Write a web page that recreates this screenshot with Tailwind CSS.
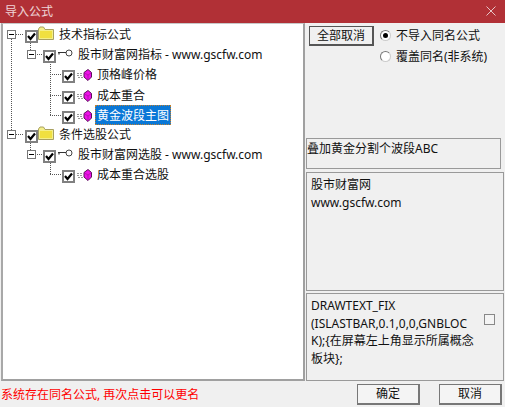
<!DOCTYPE html>
<html lang="zh-CN">

<head>
  <meta charset="UTF-8" />
  <title>导入公式</title>
  <script src="https://cdn.jsdelivr.net/npm/@tailwindcss/browser@4"></script>
</head>

<body class="bg-[#f0f0f0] overflow-hidden">
  <div class="w-[505px] h-[407px] flex flex-col text-[12px] leading-[17px] text-[#111] font-['Noto_Sans','Noto_Sans_CJK_SC',sans-serif]">
    <!-- title bar -->
    <div class="h-[23px] shrink-0 bg-[#b13036] flex items-center justify-between pl-[5px] pr-[8px] text-white/80">
      <span>导入公式</span>
      <svg width="10" height="10" viewBox="0 0 10 10" class="mr-[1px] mt-[-1px]"><path d="M0.5 0.5L9.5 9.5M9.5 0.5L0.5 9.5" stroke="#e6c4c6" fill="none" /></svg>
    </div>

    <div class="flex-1 flex pl-[1px] min-h-0">
      <!-- tree -->
      <div class="relative w-[304px] bg-white border-2 border-t border-[#a0a0a0] border-t-[#c8c8c8] border-l-[#a8a8a8]">
        <svg class="absolute left-0 top-0" width="300" height="170">
          <g stroke="#555" stroke-dasharray="1 1" fill="none">
            <path d="M8.5 15V106M13 10.5H21M27.5 19V26M32 30.5H40M47.5 38V91M47 50.5H59M47 71.5H59M47 91.5H59" />
            <path d="M13 110.5H21M27.5 119V126M32 130.5H40M47.5 139V150M47 150.5H59" />
          </g>
        </svg>
        <div class="relative flex flex-col">
          <div class="h-[20px] flex items-center pl-[4px]">
            <span class="w-[9px] h-[9px] mt-[1px] border border-[#777] bg-white flex items-center justify-center"><span class="w-[5px] h-px bg-black"></span></span>
            <span class="ml-[9px] mt-[5px] w-[13px] h-[13px] border-2 border-[#808080] bg-white flex items-center justify-center"><svg width="9" height="9" viewBox="0 0 9 9"><path d="M1 4L3.5 7L8 1.5" stroke="#000" stroke-width="2.2" fill="none" /></svg></span>
            <svg class="mt-[-3px]" width="16" height="14" viewBox="0 0 16 14"><path d="M0.5 3V13.5H15.5V3.5H7L5.5 1H2L0.5 3Z" fill="#f4ef8a" stroke="#a8a060" /><path d="M2 5H14V12H2Z" fill="#f0e040" /></svg>
            <span class="ml-[5px]">技术指标公式</span>
          </div>
          <div class="h-[20px] flex items-center pl-[24px]">
            <span class="w-[9px] h-[9px] mt-[1px] border border-[#777] bg-white flex items-center justify-center"><span class="w-[5px] h-px bg-black"></span></span>
            <span class="ml-[7px] mt-[5px] w-[13px] h-[13px] border-2 border-[#808080] bg-white flex items-center justify-center"><svg width="9" height="9" viewBox="0 0 9 9"><path d="M1 4L3.5 7L8 1.5" stroke="#000" stroke-width="2.2" fill="none" /></svg></span>
            <svg class="ml-[2px] mt-[-3px]" width="15" height="8" viewBox="0 0 15 8"><circle cx="11" cy="4" r="3" fill="none" stroke="#444" /><path d="M0 3.5H8M1 3.5V5.5" stroke="#333" stroke-width="1.2" fill="none" /></svg>
            <span class="ml-[5px]">股市财富网指标 - www.gscfw.com</span>
          </div>
          <div class="h-[20px] mb-[1px] flex items-center pl-[59px]">
            <span class="mt-[5px] w-[13px] h-[13px] border-2 border-[#808080] bg-white flex items-center justify-center"><svg width="9" height="9" viewBox="0 0 9 9"><path d="M1 4L3.5 7L8 1.5" stroke="#000" stroke-width="2.2" fill="none" /></svg></span>
            <svg class="ml-[2px] mt-[2px]" width="15" height="12" viewBox="0 0 15 12"><path d="M0 4.5H6M0 6.5H6M1 8.5H6" stroke="#999" stroke-dasharray="2 1" fill="none" /><path d="M11 0.5L14.5 3.5V8L11 11.5L7 8V3.5Z" fill="#ee10e8" stroke="#5a105a" /><path d="M7.5 4L11 6L14 4M11 6V11" stroke="#a010a0" stroke-width="0.7" fill="none" /></svg>
            <span class="ml-[5px]">顶格峰价格</span>
          </div>
          <div class="h-[20px] flex items-center pl-[59px]">
            <span class="mt-[5px] w-[13px] h-[13px] border-2 border-[#808080] bg-white flex items-center justify-center"><svg width="9" height="9" viewBox="0 0 9 9"><path d="M1 4L3.5 7L8 1.5" stroke="#000" stroke-width="2.2" fill="none" /></svg></span>
            <svg class="ml-[2px] mt-[2px]" width="15" height="12" viewBox="0 0 15 12"><path d="M0 4.5H6M0 6.5H6M1 8.5H6" stroke="#999" stroke-dasharray="2 1" fill="none" /><path d="M11 0.5L14.5 3.5V8L11 11.5L7 8V3.5Z" fill="#ee10e8" stroke="#5a105a" /><path d="M7.5 4L11 6L14 4M11 6V11" stroke="#a010a0" stroke-width="0.7" fill="none" /></svg>
            <span class="ml-[5px]">成本重合</span>
          </div>
          <div class="h-[20px] mb-[-1px] flex items-center pl-[59px]">
            <span class="mt-[5px] w-[13px] h-[13px] border-2 border-[#808080] bg-white flex items-center justify-center"><svg width="9" height="9" viewBox="0 0 9 9"><path d="M1 4L3.5 7L8 1.5" stroke="#000" stroke-width="2.2" fill="none" /></svg></span>
            <svg class="ml-[2px] mt-[2px]" width="15" height="12" viewBox="0 0 15 12"><path d="M0 4.5H6M0 6.5H6M1 8.5H6" stroke="#999" stroke-dasharray="2 1" fill="none" /><path d="M11 0.5L14.5 3.5V8L11 11.5L7 8V3.5Z" fill="#ee10e8" stroke="#5a105a" /><path d="M7.5 4L11 6L14 4M11 6V11" stroke="#a010a0" stroke-width="0.7" fill="none" /></svg>
            <span class="ml-[3px] h-[20px] shrink-0 px-[1px] flex items-center bg-[#0a78d7] text-white border border-dotted border-[#c08030]">黄金波段主图</span>
          </div>
          <div class="h-[20px] flex items-center pl-[4px]">
            <span class="w-[9px] h-[9px] mt-[1px] border border-[#777] bg-white flex items-center justify-center"><span class="w-[5px] h-px bg-black"></span></span>
            <span class="ml-[9px] mt-[5px] w-[13px] h-[13px] border-2 border-[#808080] bg-white flex items-center justify-center"><svg width="9" height="9" viewBox="0 0 9 9"><path d="M1 4L3.5 7L8 1.5" stroke="#000" stroke-width="2.2" fill="none" /></svg></span>
            <svg class="mt-[-3px]" width="16" height="14" viewBox="0 0 16 14"><path d="M0.5 3V13.5H15.5V3.5H7L5.5 1H2L0.5 3Z" fill="#f4ef8a" stroke="#a8a060" /><path d="M2 5H14V12H2Z" fill="#f0e040" /></svg>
            <span class="ml-[5px]">条件选股公式</span>
          </div>
          <div class="h-[20px] flex items-center pl-[24px]">
            <span class="w-[9px] h-[9px] mt-[1px] border border-[#777] bg-white flex items-center justify-center"><span class="w-[5px] h-px bg-black"></span></span>
            <span class="ml-[7px] mt-[5px] w-[13px] h-[13px] border-2 border-[#808080] bg-white flex items-center justify-center"><svg width="9" height="9" viewBox="0 0 9 9"><path d="M1 4L3.5 7L8 1.5" stroke="#000" stroke-width="2.2" fill="none" /></svg></span>
            <svg class="ml-[2px] mt-[-3px]" width="15" height="8" viewBox="0 0 15 8"><circle cx="11" cy="4" r="3" fill="none" stroke="#444" /><path d="M0 3.5H8M1 3.5V5.5" stroke="#333" stroke-width="1.2" fill="none" /></svg>
            <span class="ml-[5px]">股市财富网选股 - www.gscfw.com</span>
          </div>
          <div class="h-[20px] flex items-center pl-[59px]">
            <span class="mt-[5px] w-[13px] h-[13px] border-2 border-[#808080] bg-white flex items-center justify-center"><svg width="9" height="9" viewBox="0 0 9 9"><path d="M1 4L3.5 7L8 1.5" stroke="#000" stroke-width="2.2" fill="none" /></svg></span>
            <svg class="ml-[2px] mt-[2px]" width="15" height="12" viewBox="0 0 15 12"><path d="M0 4.5H6M0 6.5H6M1 8.5H6" stroke="#999" stroke-dasharray="2 1" fill="none" /><path d="M11 0.5L14.5 3.5V8L11 11.5L7 8V3.5Z" fill="#ee10e8" stroke="#5a105a" /><path d="M7.5 4L11 6L14 4M11 6V11" stroke="#a010a0" stroke-width="0.7" fill="none" /></svg>
            <span class="ml-[5px]">成本重合选股</span>
          </div>
        </div>
      </div>

      <!-- right column -->
      <div class="w-[200px] pl-[1px] flex flex-col">
        <div class="h-[115px] flex pt-[3px] pl-[3px]">
          <button class="w-[65px] h-[20px] bg-[#f0f0f0] border border-[#555] border-b-2 border-r-2 text-center leading-[17px]">全部取消</button>
          <div class="ml-[6px] flex flex-col gap-[4px] pt-[1px]">
            <label class="flex items-center h-[17px]"><span class="w-[11px] h-[11px] rounded-full bg-white border border-[#ccc] border-t-[#777] border-l-[#777] flex items-center justify-center"><span class="w-[5px] h-[5px] rounded-full bg-black"></span></span><span class="ml-[5px]">不导入同名公式</span></label>
            <label class="flex items-center h-[17px]"><span class="w-[11px] h-[11px] rounded-full bg-white border border-[#ccc] border-t-[#777] border-l-[#777]"></span><span class="ml-[5px]">覆盖同名(非系统)</span></label>
          </div>
        </div>
        <div class="w-[195px] h-[31px] border border-[#999] leading-[17px] pt-[1px]">叠加黄金分割个波段ABC</div>
        <div class="w-[198px] h-[120px] mt-[3px] border border-[#999] px-[4px] pt-[3px] leading-[18px]">
          <div>股市财富网</div>
          <div>www.gscfw.com</div>
        </div>
        <div class="w-[198px] h-[88px] mt-[2px] border border-[#999] pl-[4px] pt-[3px] leading-[17.5px] flex">
          <div class="w-[170px] whitespace-nowrap">DRAWTEXT_FIX<br />(ISLASTBAR,0.1,0,0,GNBLOC<br />K);{在屏幕左上角显示所属概念<br />板块};</div>
          <span class="ml-[3px] mt-[17px] w-[11px] h-[11px] border border-[#888] bg-[#f4f4f4]"></span>
        </div>
      </div>
    </div>

    <!-- status and buttons -->
    <div class="h-[26px] shrink-0 flex items-center pl-[1px]">
      <span class="text-[#ff0000] w-[356px]">系统存在同名公式, 再次点击可以更名</span>
      <button class="w-[63px] h-[21px] bg-[#f4f4f4] border border-[#777] border-b-2 border-r-2">确定</button>
      <button class="ml-[19px] w-[63px] h-[21px] bg-[#f4f4f4] border border-[#777] border-b-2 border-r-2">取消</button>
    </div>
  </div>
</body>

</html>
